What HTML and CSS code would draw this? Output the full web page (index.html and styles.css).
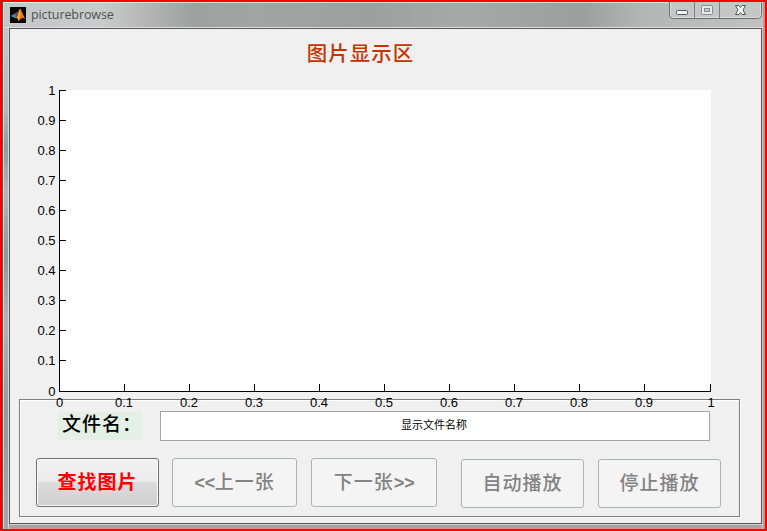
FILE: index.html
```html
<!DOCTYPE html>
<html lang="zh-CN">
<head>
<meta charset="utf-8">
<title>picturebrowse</title>
<link rel="stylesheet" href="styles.css">
</head>
<body>
<div class="window">
  <header class="titlebar">
    <svg class="logo" width="16" height="16" viewBox="0 0 16 16">
      <rect width="16" height="16" fill="#080604"/>
      <path d="M.5 9 5 6.500 7.5 5 8.500 7 6 11.500 4 10.500z" fill="#4592a8"/>
      <path d="M5 7 7.500 5 10 2 8.500 8 6 11z" fill="#75453a"/>
      <path d="M10 1.500C11.500 3 13 8 15.500 12 13 10.500 11.500 10.500 8.500 14.500 8 12 7.500 11 6 11 8.500 8 9 4 10 1.500z" fill="#e57b20"/>
      <path d="M10 2 10.500 7 8.500 13 7.500 10.500z" fill="#f8b251"/>
    </svg>
    <span class="caption">picturebrowse</span>
    <div class="controls">
      <svg width="93" height="17" viewBox="0 0 93 17">
        <path d="M.5 0V12.500Q.5 16.500 4.500 16.500H88.500Q92.500 16.500 92.500 12.500V0" fill="#c6c6c6" stroke="#6b6d70"/>
        <path d="M1.500 0V12.500Q1.500 15.500 4.500 15.500H88.500Q91.500 15.500 91.500 12.500V0" fill="none" stroke="#dedede"/>
        <path d="M25.500 0V16M50.500 0V16" stroke="#7c7e80"/>
        <rect x="7.500" y="8.500" width="11" height="4" rx="1" fill="#f5f5f5" stroke="#54575d"/>
        <rect x="32.500" y="3.500" width="11" height="9" rx="1" fill="#e8e8e8" stroke="#888b91"/>
        <rect x="35.500" y="6.500" width="5" height="3" fill="#c8c8c8" stroke="#888b91"/>
        <path d="M66.500 3.500H69.800L71.500 5.500 73.200 3.500H76.500L74 8 76.500 12.500H73.200L71.500 10.500 69.800 12.500H66.500L69 8z" fill="#f7f7f7" stroke="#54575d"/>
      </svg>
    </div>
  </header>
  <main class="client">
    <h1 class="heading">图片显示区</h1>
    <svg class="axes" width="751" height="331" viewBox="10 80 751 331">
      <rect x="59" y="90" width="652" height="301" fill="#fff"/>
      <path class="lines" d="M59.500 90V391.500H711M59 90.500H66M59 120.500H66M59 150.500H66M59 180.500H66M59 210.500H66M59 240.500H66M59 270.500H66M59 300.500H66M59 330.500H66M59 360.500H66M124.500 391V384M189.500 391V384M254.500 391V384M319.500 391V384M384.500 391V384M449.500 391V384M514.500 391V384M579.500 391V384M644.500 391V384M710.500 391V384"/>
      <g class="ylabels">
        <text x="55.500" y="95">1</text><text x="55.500" y="125">0.9</text><text x="55.500" y="155">0.8</text><text x="55.500" y="185">0.7</text><text x="55.500" y="215">0.6</text><text x="55.500" y="245">0.5</text><text x="55.500" y="275">0.4</text><text x="55.500" y="305">0.3</text><text x="55.500" y="335">0.2</text><text x="55.500" y="365">0.1</text><text x="55.500" y="396">0</text>
      </g>
      <g class="xlabels">
        <text x="59.500" y="407">0</text><text x="124" y="407">0.1</text><text x="189" y="407">0.2</text><text x="254" y="407">0.3</text><text x="319" y="407">0.4</text><text x="384" y="407">0.5</text><text x="449" y="407">0.6</text><text x="514" y="407">0.7</text><text x="579" y="407">0.8</text><text x="644" y="407">0.9</text><text x="711" y="407">1</text>
      </g>
    </svg>
    <section class="panel">
      <div class="file-row">
        <span class="file-label">文件名：</span>
        <div class="file-name">显示文件名称</div>
      </div>
      <div class="actions">
        <button class="btn find">查找图片</button>
        <button class="btn prev" disabled><b>&lt;&lt;</b>上一张</button>
        <button class="btn next" disabled>下一张<b>&gt;&gt;</b></button>
        <button class="btn play" disabled>自动播放</button>
        <button class="btn stop" disabled>停止播放</button>
      </div>
    </section>
  </main>
</div>
</body>
</html>
```
FILE: styles.css
```css
* { box-sizing: border-box; }
body {
  margin: 0;
  width: 767px;
  height: 531px;
  overflow: hidden;
  background: #f00;
  font-family: "Liberation Sans", "Noto Sans CJK SC", sans-serif;
}
.window {
  width: 767px;
  height: 531px;
  border: 2px solid #fb0000;
  padding: 0 3px 5px 7px;
  background:
    linear-gradient(90deg, #555 0 1px, #d6dbdb 1px 2px, transparent 2px 6px, #d4d6d6 6px) no-repeat 0 0 / 7px 100%,
    linear-gradient(#c5cccd, #b4bab8 20%, #919d95 28%, #b2b7b5 36%, #8f9993 48%, #b0b5b3 60%, #929b95 78%, #a4a9a6) no-repeat 0 0 / 7px 100%,
    linear-gradient(90deg, #c9c9c9 0 1px, #bd9c9c 1px 2px, #e08484 2px) no-repeat 100% 0 / 3px 100%,
    linear-gradient(0deg, #ef8c8c 0 1px, #a5a5a5 1px 4px, #d0d0d0 4px) no-repeat 0 100% / 100% 5px,
    #c5c8c9;
}
.titlebar {
  display: flex;
  height: 26px;
  margin: 0 -1px 0 -5px;
  padding-left: 5px;
  background: linear-gradient(rgba(255,255,255,.6) 0 1px, transparent 1px 25px, #dedede 25px),
    linear-gradient(90deg, #c3c8c7, #c9cbcb 13%, #b8b8b8 18%, #9e9f9f 25%, #a2a3a3 33%, #9d9f9f 48%, #a7a8a8 60%, #9c9e9e 76%, #b4b6b6 84%, #c1c1c1);
}
.logo { margin: 5px 0 0 1px; }
.caption {
  margin: 4px 0 0 5px;
  font: 12.5px/17px "Open Sans", "Noto Sans", sans-serif;
  letter-spacing: -.1px;
  color: #4d5257;
}
.controls { margin-left: auto; margin-right: 1px; height: 17px; }
.controls svg { display: block; }
.client {
  width: 753px;
  height: 496px;
  border: 1px solid #58585c;
  background: #f0f0f0;
}
.heading {
  margin: 0;
  height: 51px;
  padding-right: 50px;
  text-align: center;
  font-size: 20.5px;
  font-weight: 500;
  line-height: 50px;
  letter-spacing: 1px;
  color: #c43400;
}
.axes { display: block; position: relative; z-index: 1; }
.lines { fill: none; stroke: #000; shape-rendering: crispEdges; }
.axes text { font-size: 13px; fill: #000; }
.ylabels { text-anchor: end; }
.xlabels { text-anchor: middle; }
.panel {
  width: 721px;
  height: 118px;
  margin: -12px 0 0 9px;
  border: 1px solid #7f7f7f;
  box-shadow: 1px 1px 0 #fff, inset 1px 1px 0 #fff;
  padding: 11px 0 0 16px;
}
.file-row { display: flex; gap: 18px; padding-left: 22px; }
.file-label {
  width: 84px;
  height: 28px;
  margin-top: 1px;
  padding-left: 4px;
  background: #e4efe5;
  font-size: 19px;
  font-weight: 500;
  letter-spacing: 1px;
  line-height: 25px;
  white-space: nowrap;
  overflow: hidden;
}
.file-name {
  width: 550px;
  height: 30px;
  border: 1px solid #a5a5a5;
  background: #fff;
  padding-right: 2px;
  text-align: center;
  font-size: 11px;
  line-height: 27px;
}
.actions { display: flex; margin-top: 17px; }
.btn {
  height: 49px;
  padding: 0 0 4px;
  border: 1px solid #adb2b5;
  border-radius: 3px;
  background: #f4f4f4;
  font-family: inherit;
  font-size: 19px;
  font-weight: 500;
  letter-spacing: 1px;
  color: #838383;
  white-space: nowrap;
}
.btn b { font: bold 18px/1 "Liberation Mono", monospace; letter-spacing: -.6px; }
.find {
  width: 123px;
  border-color: #707070;
  background: linear-gradient(#f2f2f2, #ebebeb 48%, #dcdcdc 49%, #cfcfcf);
  box-shadow: inset 0 0 0 1px #fafafa;
  color: #f00;
  font-weight: 700;
}
.prev { width: 125px; margin-left: 13px; }
.next { width: 126px; margin-left: 14px; }
.play { width: 123px; margin: 1px 0 0 24px; }
.stop { width: 123px; margin: 1px 0 0 14px; }
```
